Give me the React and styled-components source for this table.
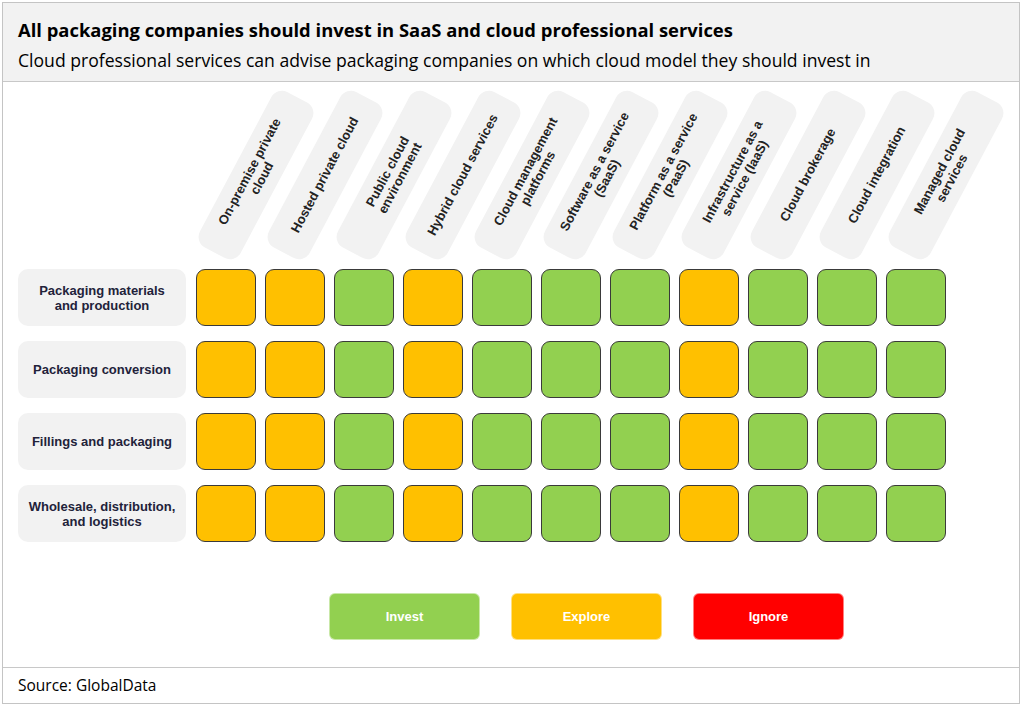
import React from 'react';
import styled, { createGlobalStyle } from 'styled-components';

const GlobalStyle = createGlobalStyle`
  html, body {
    margin: 0;
    padding: 0;
    background: #ffffff;
  }
`;

const colors = {
  invest: '#92d050',
  explore: '#ffc000',
  ignore: '#ff0000',
};

const columns = [
  'On-premise private cloud',
  'Hosted private cloud',
  'Public cloud environment',
  'Hybrid cloud services',
  'Cloud management platforms',
  'Software as a service (SaaS)',
  'Platform as a service (PaaS)',
  'Infrastructure as a service (IaaS)',
  'Cloud brokerage',
  'Cloud integration',
  'Managed cloud services',
];

const pattern = ['explore', 'explore', 'invest', 'explore', 'invest', 'invest', 'invest', 'explore', 'invest', 'invest', 'invest'];

const rows = [
  'Packaging materials and production',
  'Packaging conversion',
  'Fillings and packaging',
  'Wholesale, distribution, and logistics',
];

function App() {
  return (
    <>
      <GlobalStyle />
      <Frame>
        <Header>
          <Title>All packaging companies should invest in SaaS and cloud professional services</Title>
          <Subtitle>Cloud professional services can advise packaging companies on which cloud model they should invest in</Subtitle>
        </Header>
        <Body>
          <HeadRow>
            <Spacer />
            <CellGrid>
              {columns.map((c) => (
                <HeadCell key={c}>
                  <Tile>
                    <TileText>{c}</TileText>
                  </Tile>
                </HeadCell>
              ))}
            </CellGrid>
          </HeadRow>
          <Rows>
            {rows.map((r) => (
              <Row key={r}>
                <RowLabel>{r}</RowLabel>
                <CellGrid>
                  {pattern.map((p, i) => (
                    <Cell key={i} $tone={p} />
                  ))}
                </CellGrid>
              </Row>
            ))}
          </Rows>
          <Legend>
            <LegendItem $tone="invest">Invest</LegendItem>
            <LegendItem $tone="explore">Explore</LegendItem>
            <LegendItem $tone="ignore">Ignore</LegendItem>
          </Legend>
        </Body>
        <Footer>Source: GlobalData</Footer>
      </Frame>
    </>
  );
}

const Frame = styled.div`
  margin: 2px 0 0 2px;
  width: 1018px;
  height: 702px;
  box-sizing: border-box;
  border: 1px solid #c4c4c4;
  display: flex;
  flex-direction: column;
  font-family: "Open Sans", Lato, sans-serif;
  color: #000;
`;

const Header = styled.div`
  height: 79px;
  box-sizing: border-box;
  background: #f2f2f2;
  border-bottom: 1px solid #c8c8c8;
  padding: 12px 0 0 15px;
`;

const Title = styled.div`
  font-size: 18.4px;
  font-weight: 700;
  line-height: 30px;
`;

const Subtitle = styled.div`
  font-size: 17.6px;
  line-height: 30px;
`;

const Body = styled.div`
  flex: 1;
  padding: 6px 0 0 15px;
`;

const HeadRow = styled.div`
  display: flex;
  height: 175px;
`;

const Spacer = styled.div`
  width: 178px;
  flex: none;
`;

const CellGrid = styled.div`
  display: grid;
  grid-template-columns: repeat(11, 60px);
  column-gap: 9px;
`;

const HeadCell = styled.div`
  display: flex;
  align-items: center;
  justify-content: center;
  height: 175px;
`;

const Tile = styled.div`
  flex: none;
  width: 176px;
  height: 46px;
  border-radius: 12px;
  background: #f2f2f2;
  display: flex;
  align-items: center;
  justify-content: center;
  transform: translate(30px, -1px) rotate(-62deg);
`;

const TileText = styled.div`
  width: 150px;
  text-align: center;
  font-family: "Liberation Sans", Arial, sans-serif;
  font-weight: 700;
  font-size: 13px;
  line-height: 14px;
  color: #222;
`;

const Rows = styled.div`
  margin-top: 6px;
  display: flex;
  flex-direction: column;
  gap: 15px;
`;

const Row = styled.div`
  display: flex;
  align-items: stretch;
`;

const RowLabel = styled.div`
  width: 168px;
  height: 57px;
  margin-right: 10px;
  flex: none;
  background: #f2f2f2;
  border-radius: 10px;
  display: flex;
  align-items: center;
  justify-content: center;
  text-align: center;
  padding: 0 8px;
  box-sizing: border-box;
  font-family: "Liberation Sans", Arial, sans-serif;
  font-weight: 700;
  font-size: 13px;
  line-height: 15px;
  color: #22223a;
`;

const Cell = styled.div`
  height: 57px;
  box-sizing: border-box;
  border: 1px solid #3a3a3a;
  border-radius: 9px;
  background: ${(p) => colors[p.$tone]};
`;

const Legend = styled.div`
  margin: 51px 0 0 311px;
  display: flex;
  gap: 31px;
`;

const LegendItem = styled.div`
  width: 151px;
  height: 47px;
  box-sizing: border-box;
  border-radius: 6px;
  border: 1px solid rgba(255, 255, 255, 0.5);
  background: ${(p) => colors[p.$tone]};
  color: #fff;
  display: flex;
  align-items: center;
  justify-content: center;
  font-family: "Liberation Sans", Arial, sans-serif;
  font-weight: 700;
  font-size: 13px;
`;

const Footer = styled.div`
  height: 36px;
  box-sizing: border-box;
  border-top: 1px solid #c8c8c8;
  padding: 8px 0 0 15px;
  font-size: 15.5px;
  line-height: 19px;
`;

export default App;
